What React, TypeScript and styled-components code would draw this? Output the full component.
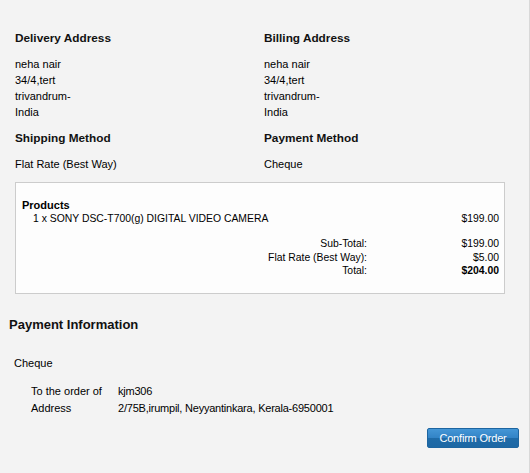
import styled, { createGlobalStyle } from "styled-components";

const GlobalStyle = createGlobalStyle`
  html, body {
    margin: 0;
    padding: 0;
    background: #f3f3f3;
  }
  body {
    font-family: "Liberation Sans", Arial, sans-serif;
    font-size: 11px;
    color: #000;
  }
`;

const summary = {
  delivery: ["neha nair", "34/4,tert", "trivandrum-", "India"],
  billing: ["neha nair", "34/4,tert", "trivandrum-", "India"],
  shipping: "Flat Rate (Best Way)",
  payment: "Cheque",
};

const totals = [
  { label: "Sub-Total:", value: "$199.00" },
  { label: "Flat Rate (Best Way):", value: "$5.00" },
  { label: "Total:", value: "$204.00", strong: true },
];

const App = () => {
  return (
    <>
      <GlobalStyle />
      <Page>
        <Columns>
          <Column>
            <Heading>Delivery Address</Heading>
            <Lines>
              {summary.delivery.map((line, i) => (
                <Line key={i}>{line}</Line>
              ))}
            </Lines>
            <Heading>Shipping Method</Heading>
            <Lines>
              <Line>{summary.shipping}</Line>
            </Lines>
          </Column>
          <Column>
            <Heading>Billing Address</Heading>
            <Lines>
              {summary.billing.map((line, i) => (
                <Line key={i}>{line}</Line>
              ))}
            </Lines>
            <Heading>Payment Method</Heading>
            <Lines>
              <Line>{summary.payment}</Line>
            </Lines>
          </Column>
        </Columns>

        <ProductBox>
          <ProductsTitle>Products</ProductsTitle>
          <ProductRow>
            <span>1 x SONY DSC-T700(g) DIGITAL VIDEO CAMERA</span>
            <span>$199.00</span>
          </ProductRow>
          <Totals>
            {totals.map((t) => (
              <TotalRow key={t.label}>
                <span>{t.label}</span>
                <TotalValue $strong={t.strong}>{t.value}</TotalValue>
              </TotalRow>
            ))}
          </Totals>
        </ProductBox>

        <SectionTitle>Payment Information</SectionTitle>
        <PaymentName>Cheque</PaymentName>
        <ChequeTable>
          <span>To the order of</span>
          <ChequeValue>kjm306</ChequeValue>
          <span>Address</span>
          <ChequeValue>2/75B,irumpil, Neyyantinkara, Kerala-6950001</ChequeValue>
        </ChequeTable>

        <Actions>
          <ConfirmButton type="button">Confirm Order</ConfirmButton>
        </Actions>
      </Page>
    </>
  );
};

export default App;

const Page = styled.div`
  min-height: 473px;
  box-sizing: border-box;
  padding: 30px 10px 20px 9px;
  border-right: 1px solid #d8d8d8;
`;

const Columns = styled.div`
  display: grid;
  grid-template-columns: 249px 1fr;
  padding-left: 6px;
`;

const Column = styled.div`
  display: flex;
  flex-direction: column;
`;

const Heading = styled.div`
  font-weight: bold;
  font-size: 11.8px;
  line-height: 16px;
  color: #111;
`;

const Lines = styled.div`
  margin: 10px 0;
  line-height: 16px;
`;

const Line = styled.div``;

const ProductBox = styled.div`
  margin: 0 14px 0 6px;
  background: #fdfdfd;
  border: 1px solid #cccccc;
  padding: 15px 5px 15px 6px;
  font-size: 10.4px;
  line-height: 14px;
`;

const ProductsTitle = styled.div`
  font-weight: bold;
  font-size: 11px;
`;

const ProductRow = styled.div`
  display: flex;
  justify-content: space-between;
  padding-left: 11px;
`;

const Totals = styled.div`
  margin-top: 11px;
  display: grid;
  grid-template-columns: auto 132px;
  justify-content: end;
  line-height: 13.5px;
`;

const TotalRow = styled.div`
  display: contents;

  & > span {
    text-align: right;
  }
`;

const TotalValue = styled.span<{ $strong?: boolean }>`
  font-weight: ${({ $strong }) => ($strong ? "bold" : "normal")};
`;

const SectionTitle = styled.div`
  margin-top: 23px;
  font-weight: bold;
  font-size: 13px;
  line-height: 16px;
  color: #111;
`;

const PaymentName = styled.div`
  margin-top: 22px;
  padding-left: 5px;
  line-height: 16px;
`;

const ChequeTable = styled.div`
  margin-top: 12px;
  padding-left: 22px;
  display: grid;
  grid-template-columns: 87px auto;
  justify-content: start;
  line-height: 17px;
`;

const ChequeValue = styled.span`
  letter-spacing: -0.22px;
`;

const Actions = styled.div`
  margin-top: 11px;
  display: flex;
  justify-content: flex-end;
`;

const ConfirmButton = styled.button`
  height: 20px;
  width: 92px;
  padding: 0;
  border: 1px solid #1d65a0;
  border-radius: 2px;
  background: linear-gradient(to bottom, #4496d6 0%, #3283c6 50%, #1f6ba8 51%, #1d68a4 100%);
  color: #fff;
  font-family: "Liberation Sans", Arial, sans-serif;
  font-size: 11px;
  letter-spacing: -0.2px;
  cursor: pointer;
`;
